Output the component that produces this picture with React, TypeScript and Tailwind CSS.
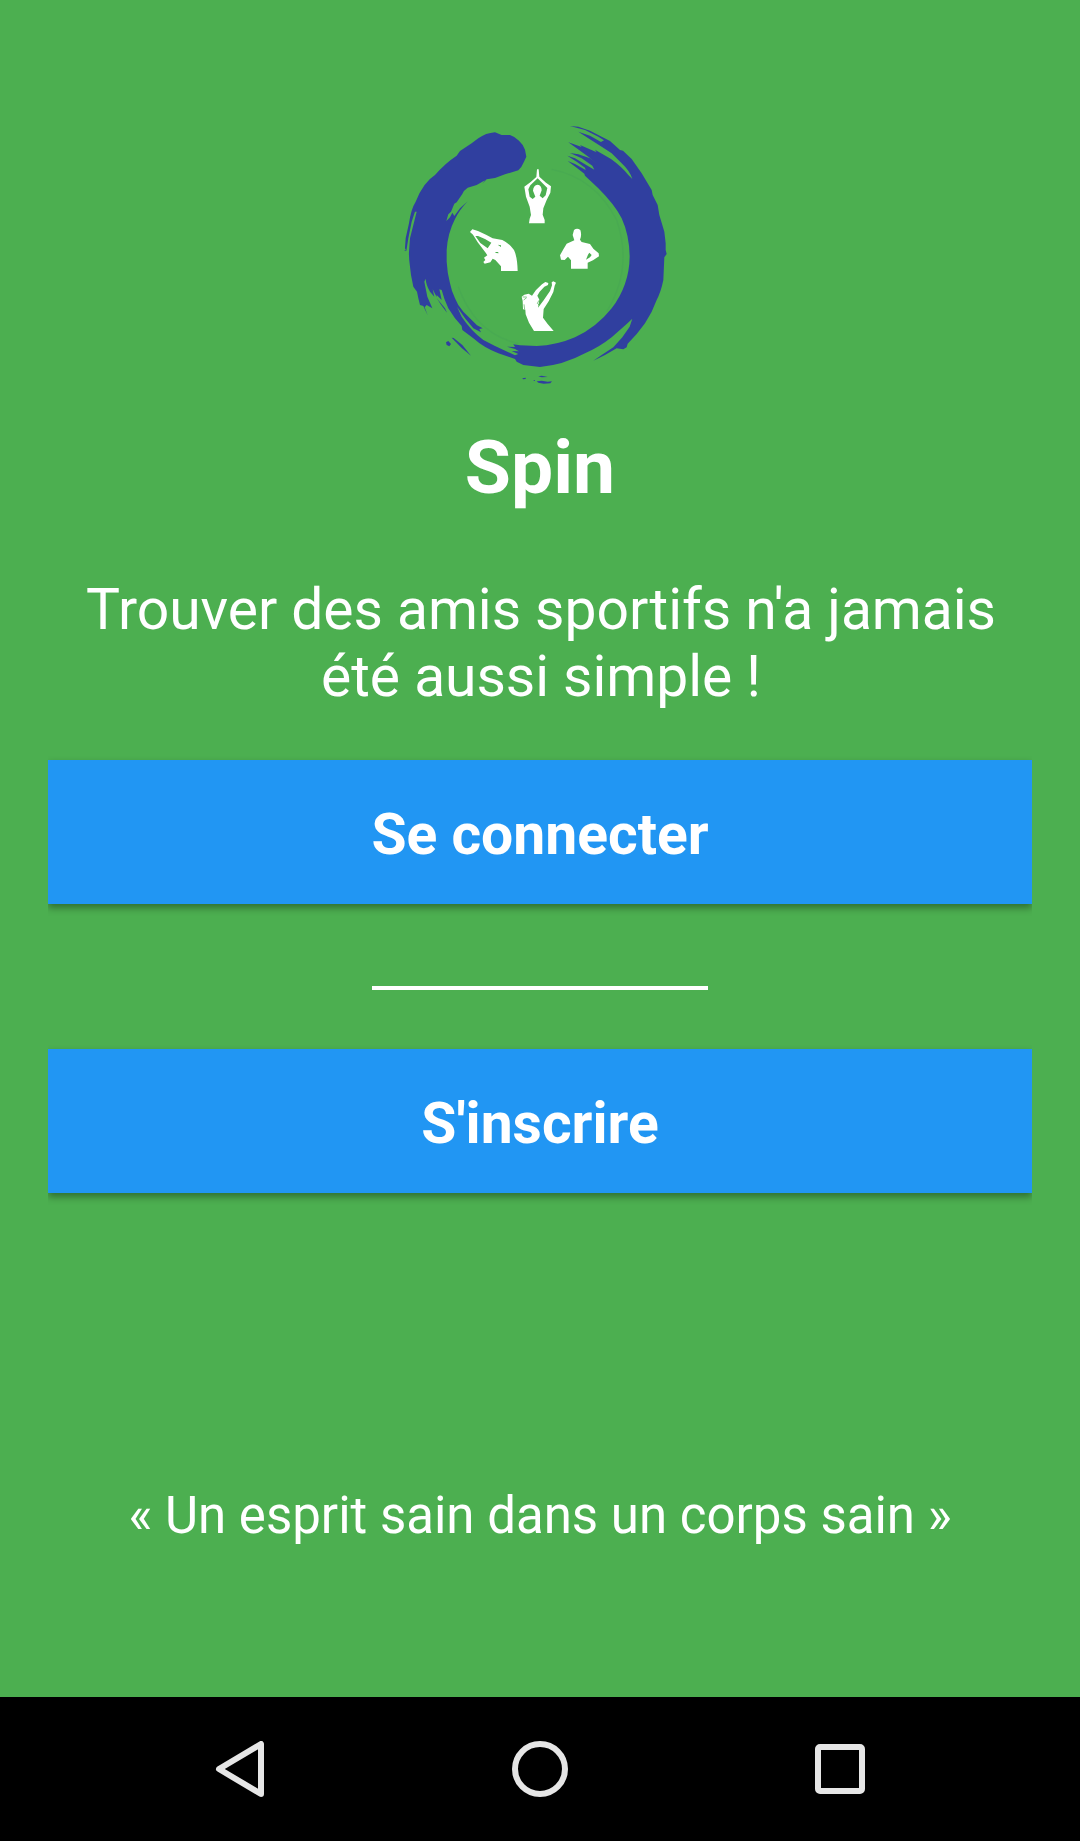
import type { ReactNode } from "react";

function Logo() {
  return (
    <svg viewBox="0 0 840 840" className="mr-[10px] h-[280px] w-[280px]" role="img" aria-label="Spin">
      <g fill="#303f9f">
        <path d="M300 52L320 60L345 60Q362 66 372 77Q386 90 390 104L394 125L387 140Q380 157 370 166L330 178L300 189L275 193L262 206L270 196L245 210L218 218Q207 225 202 237L185 262L178 266L168 290L160 298L154 318L165 307L172 293L178 303L195 280L218 259Q194 284 180 312Q158 355 155 405V440Q157 475 165 505Q170 530 180 550Q188 572 205 590L230 615L246 631L263 640L253 642L258 652L235 640L210 610L186 575L200 605Q228 647 265 675L300 693L360 721L370 717L350 708L372 709L360 702L336 695L360 696L355 688L375 691L425 693Q485 691 540 667Q605 637 650 580Q703 510 704 425Q703 360 680 310Q660 270 610 220L570 182L568 176L545 158L518 138L540 147L572 165L570 158L545 140L517 122L540 130L570 148L598 164L592 152L560 130L525 114L550 118L585 130L607 147L580 125L545 100L520 82L560 96L555 90L605 112L600 104L648 132Q680 155 700 180L712 192Q704 167 680 145L650 115L620 95L580 70L550 50L585 62L618 81L627 76L610 65L570 45L525 33L550 35L585 47L620 65L645 78L675 105L684 107L710 132L740 175L770 225L773 240L788 270L793 300L808 350L812 385V405L815 417L808 427L805 495Q798 530 785 555Q772 592 750 625Q727 658 698 686L695 697L685 703L665 700L630 720L595 737L620 720L655 697L682 667L704 635L712 611L695 627L650 667Q612 697 570 715Q505 750 435 756L385 750L365 740L360 732L310 715Q266 698 235 670L202 645L200 633L180 610L160 580Q147 553 140 525L133 523L140 555L125 540L125 546L113 523L118 545L105 530Q93 510 92 491L88 500L97 545L112 580L95 570L89 577L98 601L85 573L75 570L70 550L66 530L55 515L48 480L45 455Q41 425 42 410L45 370L65 290L60 290L50 320L40 370L34 408L30 400L32 370L42 325Q48 282 62 260Q85 202 120 180Q150 145 185 122L195 108L230 85L250 70Q272 54 300 52Z" />
        <path d="M153 682L160 678L168 687L163 694L155 690Z" />
        <path d="M170 668L176 669L202 690L228 722L200 699Z" />
        <path d="M382 790L392 788V792L384 793ZM414 796L420 795V798ZM430 784L440 782L458 786L440 787ZM425 799L440 797L458 800L471 799L466 805L446 806L430 803Z" />
        <path d="M125 549L132 558L150 580L156 593L137 568Z" />
        <path d="M28 405L33 406L31 409Z" />
      </g>
      <g fill="none" stroke="#49aa52" strokeWidth="4">
        <path d="M190 515Q240 655 370 686" />
        <path d="M470 163Q600 188 665 315Q715 460 635 590" />
      </g>
      <g fill="#fff" transform="translate(195 135)">
        <path
          fillRule="evenodd"
          d="M231 28H236L238 50L258 68L273 79L271 98L260 120L250 145L248 164L254 180V190H207L209 176L213 165L209 140L198 110L193 80L212 66L229 51ZM233 55L211 76L205 88L209 110L218 117L226 110L219 92Q220 75 233 74Q245 76 245 91L239 107L248 115L257 106L262 84L250 72Z"
        />
        <path
          fillRule="evenodd"
          d="M30 216L37 208L54 213L78 224L98 235L127 240Q149 251 162 270Q172 291 173 333H123V319L106 300L98 296L91 307L74 311L70 306L76 300L72 293L82 286L77 278L53 247L39 224ZM46 228L61 249L83 265L94 248L75 237L54 228ZM113 254L123 256V261ZM105 276L114 276L116 280L108 279Z"
        />
        <path
          fillRule="evenodd"
          d="M342 210Q351 202 361 210Q366 225 360 239L365 246L390 252L400 266L416 280L417 289L399 301L383 308V326H333V301L324 290L314 300L303 299L300 286L311 266L320 251L343 241L338 225ZM384 284L378 299L390 292L395 285L388 278Z"
        />
        <path d="M256 366L265 369L264 375L253 380L239 395L232 407L238 419L234 443L251 421L270 393L276 376L275 367L280 364L288 368L284 377L280 396L266 424L251 447L249 473L263 492L281 513H222L207 488L197 463L196 449L189 448L188 423L185 410L193 404L206 401L216 407L228 390L246 373Z" />
      </g>
      <g fill="none" stroke="#4caf50" strokeWidth="2" transform="translate(195 135)">
        <path d="M188 411L200 411M191 420L200 413M192 433L194 449M237 421L232 430L237 435" />
      </g>
    </svg>
  );
}

function ActionButton({ children }: { children: ReactNode }) {
  return (
    <div className="-my-3 w-full overflow-hidden py-3">
      <button className="block h-36 w-full bg-[#2196f3] pt-[5px] text-[57px] leading-[139px] font-bold text-white shadow-[0_4px_7px_rgba(0,0,0,0.36)]">
        {children}
      </button>
    </div>
  );
}

function NavigationBar() {
  return (
    <nav className="flex h-36 w-full items-center justify-center gap-[244px] bg-black">
      <svg viewBox="0 0 56 56" className="h-14 w-14" fill="none" stroke="#e6e6e6" strokeWidth="6" strokeLinejoin="round">
        <path d="M49 3V53L7 28Z" />
      </svg>
      <svg viewBox="0 0 56 56" className="h-14 w-14" fill="none" stroke="#e6e6e6" strokeWidth="6">
        <circle cx="28" cy="28" r="25" />
      </svg>
      <svg viewBox="0 0 56 56" className="h-14 w-14" fill="none" stroke="#e6e6e6" strokeWidth="6">
        <rect x="6" y="6" width="44" height="44" rx="2" />
      </svg>
    </nav>
  );
}

export default function App() {
  return (
    <div className="flex h-[1841px] w-[1080px] flex-col bg-[#4caf50] font-[Roboto,sans-serif] text-white">
      <main className="flex flex-1 flex-col items-center px-12 pt-[115px]">
        <Logo />
        <h1 className="mt-[26px] text-[75px] leading-[92px] font-bold">Spin</h1>
        <p className="mt-[63px] w-[960px] pl-[2px] text-center text-[57px] leading-[67px] tracking-[-0.05px]">
          Trouver des amis sportifs n'a jamais
          <br />
          été aussi simple !
        </p>
        <div className="mt-[50px] flex w-full flex-col items-center">
          <ActionButton>Se connecter</ActionButton>
          <div className="mt-[82px] mb-[59px] h-1 w-[336px] bg-white" />
          <ActionButton>S'inscrire</ActionButton>
        </div>
        <p className="mt-[292px] text-[51px] leading-[62px]">« Un esprit sain dans un corps sain »</p>
      </main>
      <NavigationBar />
    </div>
  );
}
